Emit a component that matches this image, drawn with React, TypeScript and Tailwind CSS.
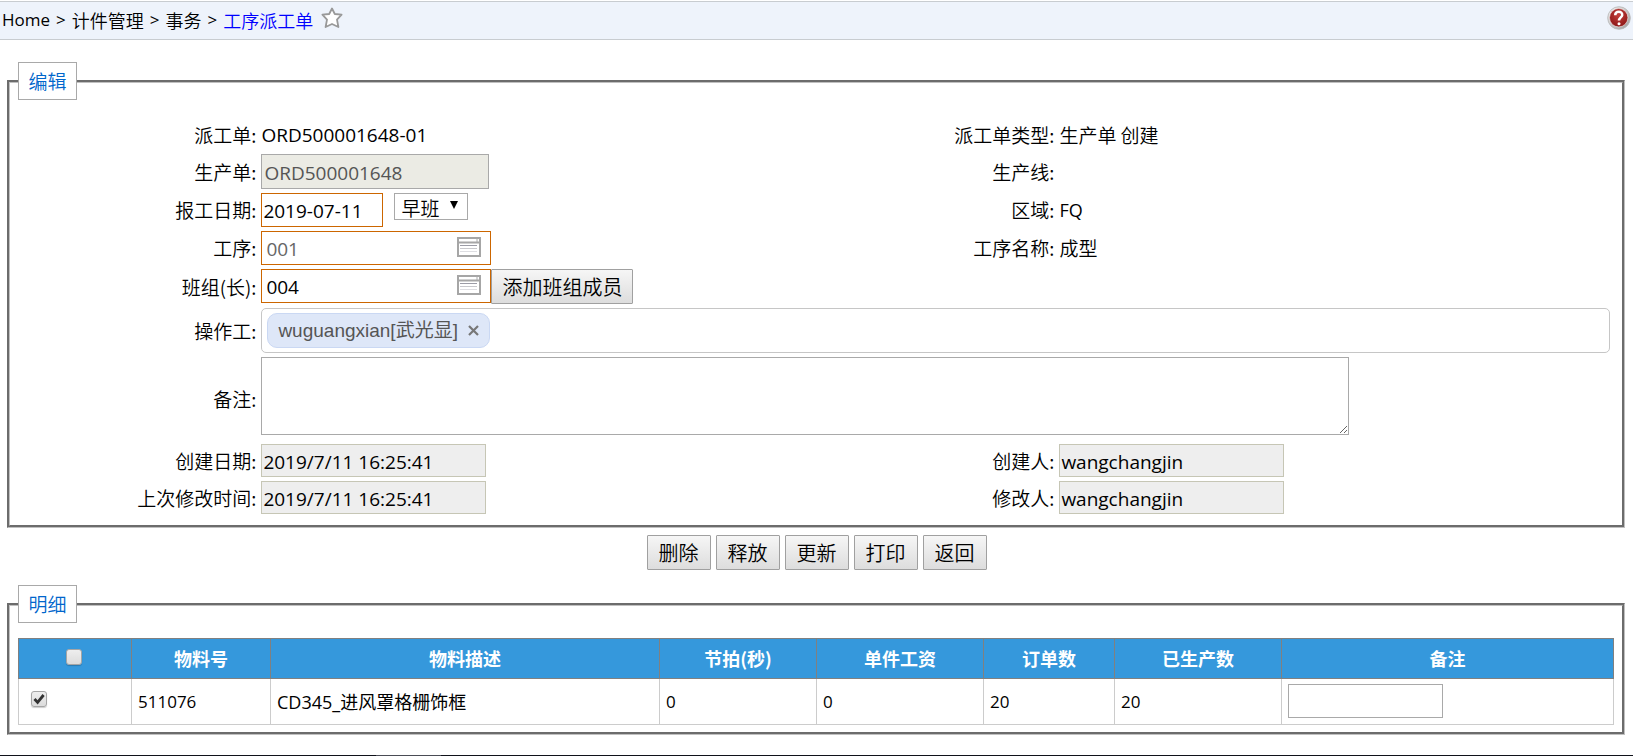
import React from 'react'

const latin = 'font-normal font-["Open_Sans","Noto_Sans_CJK_SC",sans-serif]'
const stampInput = `block w-[225px] h-[33px] border border-[#c6c6b5] bg-[#eeeeee] pl-px pt-0.5 text-[19px] text-black ${latin}`
const button = 'h-[35px] border border-[#a0a0a0] rounded-[1px] bg-linear-to-b from-[#f6f6f6] to-[#dddddd] px-2.5 text-[20px] leading-8 whitespace-nowrap'

function Label({ children, htmlFor }: { children: React.ReactNode; htmlFor?: string }) {
  return (
    <label htmlFor={htmlFor} className="text-right pr-px whitespace-nowrap">{children}</label>
  )
}

function Panel({ title, children, className }: { title: string; children: React.ReactNode; className: string }) {
  return (
    <fieldset className={`ml-[7px] mr-2 min-w-0 border-3 [border-style:groove] border-[#c0c0c0] px-2 ${className}`}>
      <legend>
        <span className="block h-[38px] w-[59px] border border-[#a9a9a9] bg-white text-center text-[19px] leading-9 text-[#0066cc]">{title}</span>
      </legend>
      {children}
    </fieldset>
  )
}

function StarIcon() {
  return (
    <svg width="22" height="22" viewBox="0 0 22 22" fill="#fff" stroke="#999" strokeWidth="1.8" strokeLinejoin="round">
      <path d="M11 1.5 13.8 7 20.6 7.6 16 12.6 17.4 20 11 17 4.6 20 6 12.6 1.4 7.6 8.2 7Z" />
    </svg>
  )
}

function HelpIcon() {
  return (
    <svg width="24" height="24" viewBox="0 0 24 24">
      <defs>
        <linearGradient id="ring" x1="0" y1="0" x2="1" y2="1">
          <stop offset="0" stopColor="#f4f4f4" />
          <stop offset="1" stopColor="#9b9b9b" />
        </linearGradient>
        <radialGradient id="ball" cx="0.5" cy="0.35" r="0.65">
          <stop offset="0" stopColor="#c4403c" />
          <stop offset="1" stopColor="#8c1616" />
        </radialGradient>
      </defs>
      <circle cx="12" cy="12" r="11.3" fill="url(#ring)" stroke="#b5b5b5" strokeWidth="0.8" />
      <circle cx="11.7" cy="11.7" r="9.2" fill="url(#ball)" stroke="#f5e5e5" strokeWidth="0.6" />
      <path d="M8.2 9.2C8.3 4.6 15.6 4.7 15.2 9.1 15 11.4 12 11.5 12 14.6" fill="none" stroke="#fff" strokeWidth="2.5" />
      <circle cx="12" cy="17.8" r="1.5" fill="#fff" />
    </svg>
  )
}

function PickerIcon() {
  return (
    <svg width="24" height="20" viewBox="0 0 24 20" fill="none">
      <path d="M1 1H23V19H1ZM1 5.5H23" stroke="#a6a6a6" strokeWidth="2" />
      <path d="M20 1V5" stroke="#aaa" />
      <path d="M3 8.5H20" stroke="#9c9ca6" />
      <path d="M3 11.5H20" stroke="#c8c8cc" />
      <path d="M3 14.5H20" stroke="#dedee2" />
    </svg>
  )
}

function LookupInput({ id, value, disabled }: { id: string; value: string; disabled?: boolean }) {
  return (
    <div className="relative w-[230px]">
      <input
        id={id}
        defaultValue={value}
        disabled={disabled}
        className={`block w-full h-[34px] border border-[#cc6600] bg-white pl-1 pt-0.5 text-[19px] text-black disabled:text-[#666] ${latin}`}
      />
      <button type="button" aria-label="选择" className="absolute right-2.5 top-1.5"><PickerIcon /></button>
    </div>
  )
}

function Checkbox({ label, checked }: { label: string; checked?: boolean }) {
  return (
    <span className="inline-grid size-4 align-middle">
      <input
        type="checkbox"
        aria-label={label}
        defaultChecked={checked}
        className="peer col-start-1 row-start-1 size-4 appearance-none rounded-[3px] border border-[#a5a5a5] bg-linear-to-b from-[#eeeeee] to-[#dcdcdc] shadow-[0_1px_1px_rgba(0,0,0,0.2)]"
      />
      <svg viewBox="0 0 16 16" className="pointer-events-none invisible peer-checked:visible col-start-1 row-start-1 size-4">
        <path d="M3.5 8 6.6 11.4 12.6 4" fill="none" stroke="#333" strokeWidth="2.8" />
      </svg>
    </span>
  )
}

const columns = [
  { title: '物料号', width: 'w-[139px]' },
  { title: '物料描述', width: 'w-[389px]' },
  { title: '节拍(秒)', width: 'w-[157px]' },
  { title: '单件工资', width: 'w-[167px]' },
  { title: '订单数', width: 'w-[131px]' },
  { title: '已生产数', width: 'w-[167px]' },
  { title: '备注', width: '' },
]

const rows = [['511076', 'CD345_进风罩格栅饰框', '0', '0', '20', '20']]

export default function App() {
  return (
    <div className='bg-white text-black text-[19px] font-[350] leading-7 font-["Noto_Sans_CJK_SC",sans-serif]'>
      <header className="mt-px flex h-[39px] items-center justify-between border-y border-[#c8ccd0] bg-[#eef3fb] pl-0.5 pr-0.5">
        <nav className="flex items-center gap-1.5 pb-0.5 text-[18px]">
          <span className={`text-[17px] ${latin}`}>Home</span>
          <span className={`text-[17px] ${latin}`}>&gt;</span>
          <span>计件管理</span>
          <span className={`text-[17px] ${latin}`}>&gt;</span>
          <span>事务</span>
          <span className={`text-[17px] ${latin}`}>&gt;</span>
          <a href="#" className="text-[#0000ff]">工序派工单</a>
          <button type="button" aria-label="收藏" className="ml-0.5 mb-1"><StarIcon /></button>
        </nav>
        <button type="button" aria-label="帮助" className="mb-1.5"><HelpIcon /></button>
      </header>

      <form className="pt-[22px]" onSubmit={(e) => e.preventDefault()}>
        <Panel title="编辑" className="pt-5 pb-[11px]">
          <div className="grid grid-cols-[15%_35%_15%_35%] gap-y-1 items-center *:even:pl-1">
            <Label>派工单:</Label>
            <div className={`h-[30px] text-[19px] leading-[30px] ${latin}`}>ORD500001648-01</div>
            <Label>派工单类型:</Label>
            <div>生产单 创建</div>

            <Label htmlFor="order">生产单:</Label>
            <div>
              <input id="order" disabled defaultValue="ORD500001648" className={`block w-[228px] h-[35px] border border-[#a9a9a9] bg-[#ebebe4] pl-0.5 pt-0.5 text-[19px] text-[#555] ${latin}`} />
            </div>
            <Label>生产线:</Label>
            <div></div>

            <Label htmlFor="date">报工日期:</Label>
            <div className="flex items-start gap-[11px]">
              <input id="date" defaultValue="2019-07-11" className={`block w-[122px] h-[34px] border border-[#cc6600] pl-px pt-0.5 text-[19px] ${latin}`} />
              <div className="relative">
                <select aria-label="班次" className="block h-[27px] w-[74px] appearance-none border border-[#a9a9a9] bg-white pl-1.5 text-[19px] leading-7">
                  <option>早班</option>
                  <option>晚班</option>
                </select>
                <svg width="8" height="8" viewBox="0 0 8 8" className="pointer-events-none absolute right-2.5 top-2"><path d="M0 0H8L4 8Z" /></svg>
              </div>
            </div>
            <Label>区域:</Label>
            <div className={`text-[18px] ${latin}`}>FQ</div>

            <Label htmlFor="process">工序:</Label>
            <div><LookupInput id="process" value="001" disabled /></div>
            <Label>工序名称:</Label>
            <div>成型</div>

            <Label htmlFor="team">班组(长):</Label>
            <div className="col-span-3 flex items-start">
              <LookupInput id="team" value="004" />
              <button type="button" className={button}>添加班组成员</button>
            </div>
          </div>

          <div className="mt-1 grid grid-cols-[15%_85%] gap-y-1 items-center *:even:pl-1">
            <Label>操作工:</Label>
            <div>
              <div className="mr-1 flex h-[45px] items-center rounded-[5px] border border-[#c6c6c6] pl-[5px]">
                <span className='flex h-[35px] items-center gap-2.5 rounded-[10px] border border-[#cad8f3] bg-[#dee7f8] px-2.5 text-[19px] font-normal text-[#555] font-["Liberation_Sans","Noto_Sans_CJK_SC",sans-serif]'>
                  wuguangxian[武光显]
                  <button type="button" aria-label="移除">
                    <svg width="11" height="11" viewBox="0 0 11 11" stroke="#777" strokeWidth="2.2"><path d="M1 1 10 10M10 1 1 10" /></svg>
                  </button>
                </span>
              </div>
            </div>

            <Label htmlFor="remark">备注:</Label>
            <div className="h-[83px]">
              <textarea id="remark" className="block h-[78px] w-[1088px] max-w-full resize border border-[#a9a9a9]" />
            </div>
          </div>

          <div className="mt-1 grid grid-cols-[15%_35%_15%_35%] gap-y-1 items-center *:even:pl-1">
            <Label htmlFor="created">创建日期:</Label>
            <div><input id="created" readOnly value="2019/7/11 16:25:41" className={stampInput} /></div>
            <Label htmlFor="creator">创建人:</Label>
            <div><input id="creator" readOnly value="wangchangjin" className={stampInput} /></div>

            <Label htmlFor="modified">上次修改时间:</Label>
            <div><input id="modified" readOnly value="2019/7/11 16:25:41" className={stampInput} /></div>
            <Label htmlFor="modifier">修改人:</Label>
            <div><input id="modifier" readOnly value="wangchangjin" className={stampInput} /></div>
          </div>
        </Panel>

        <div className="mt-[7px] mb-[15px] flex justify-center gap-[5px]">
          {['删除', '释放', '更新', '打印', '返回'].map((text) => (
            <button key={text} type="button" className={`${button} w-16`}>{text}</button>
          ))}
        </div>

        <Panel title="明细" className="pt-[15px] pb-[7px]">
          <table className="w-full table-fixed border-collapse text-[18px]">
            <thead>
              <tr className="h-10 bg-[#3598dc] text-white">
                <th className="w-[113px] border border-[#808080] pb-2.5 pr-0.5"><Checkbox label="全选" /></th>
                {columns.map((col) => (
                  <th key={col.title} className={`border border-[#808080] pb-0.5 font-bold ${col.width}`}>{col.title}</th>
                ))}
              </tr>
            </thead>
            <tbody>
              {rows.map((row) => (
                <tr key={row[0]} className="h-[46px]">
                  <td className="border border-[#cccccc] pl-3 pb-3"><Checkbox label={row[0]} checked /></td>
                  {row.map((cell, i) => (
                    <td key={i} className={`border border-[#cccccc] pl-1.5 ${i === 1 ? 'text-[18px]' : 'text-[17px]'} ${latin}`}>{cell}</td>
                  ))}
                  <td className="border border-[#cccccc] pl-1.5 pb-0.5">
                    <input aria-label="备注" className="block h-[34px] w-[155px] border border-[#a9a9a9]" />
                  </td>
                </tr>
              ))}
            </tbody>
          </table>
        </Panel>
      </form>

      <footer className="mt-5 flex h-px bg-[#10121a]">
        <div className="ml-[23%] w-[4%] bg-[#4a4c55]"></div>
      </footer>
    </div>
  )
}
